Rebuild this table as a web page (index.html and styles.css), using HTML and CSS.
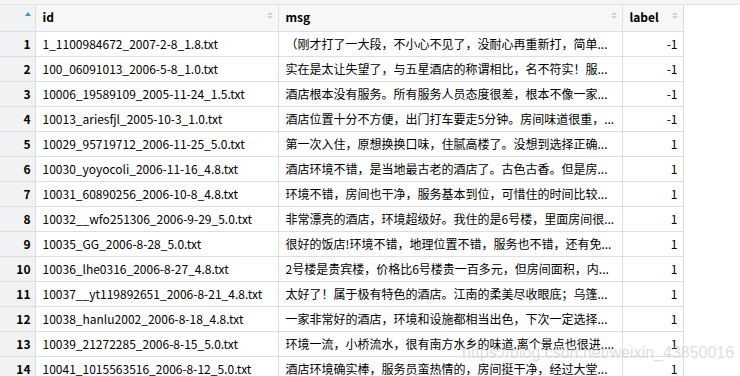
FILE: index.html
```html
<!DOCTYPE html>
<html lang="zh">
  <head>
    <meta charset="UTF-8" />
    <title>Data viewer</title>
    <link rel="stylesheet" href="styles.css">
  </head>
  <body>
    <div class="toolbar"></div>
    <table class="grid">
      <colgroup>
        <col class="c-num">
        <col class="c-id">
        <col class="c-msg">
        <col class="c-label">
      </colgroup>
      <thead>
        <tr>
          <th class="num-head"><span class="sort-up"></span></th>
          <th><div class="head"><span>id</span><span class="sorter"></span></div></th>
          <th><div class="head"><span>msg</span><span class="sorter"></span></div></th>
          <th><div class="head"><span>label</span><span class="sorter"></span></div></th>
        </tr>
      </thead>
      <tbody>
        <tr><td class="num">1</td><td>1_1100984672_2007-2-8_1.8.txt</td><td>（刚才打了一大段，不小心不见了，没耐心再重新打，简单...</td><td class="val">-1</td></tr>
        <tr><td class="num">2</td><td>100_06091013_2006-5-8_1.0.txt</td><td>实在是太让失望了，与五星酒店的称谓相比，名不符实！服...</td><td class="val">-1</td></tr>
        <tr><td class="num">3</td><td>10006_19589109_2005-11-24_1.5.txt</td><td>酒店根本没有服务。所有服务人员态度很差，根本不像一家...</td><td class="val">-1</td></tr>
        <tr><td class="num">4</td><td>10013_ariesfjl_2005-10-3_1.0.txt</td><td>酒店位置十分不方便，出门打车要走5分钟。房间味道很重，...</td><td class="val">-1</td></tr>
        <tr><td class="num">5</td><td>10029_95719712_2006-11-25_5.0.txt</td><td>第一次入住，原想换换口味，住腻高楼了。没想到选择正确...</td><td class="val">1</td></tr>
        <tr><td class="num">6</td><td>10030_yoyocoli_2006-11-16_4.8.txt</td><td>酒店环境不错，是当地最古老的酒店了。古色古香。但是房...</td><td class="val">1</td></tr>
        <tr><td class="num">7</td><td>10031_60890256_2006-10-8_4.8.txt</td><td>环境不错，房间也干净，服务基本到位，可惜住的时间比较...</td><td class="val">1</td></tr>
        <tr><td class="num">8</td><td>10032__wfo251306_2006-9-29_5.0.txt</td><td>非常漂亮的酒店，环境超级好。我住的是6号楼，里面房间很...</td><td class="val">1</td></tr>
        <tr><td class="num">9</td><td>10035_GG_2006-8-28_5.0.txt</td><td>很好的饭店!环境不错，地理位置不错，服务也不错，还有免...</td><td class="val">1</td></tr>
        <tr><td class="num">10</td><td>10036_lhe0316_2006-8-27_4.8.txt</td><td>2号楼是贵宾楼，价格比6号楼贵一百多元，但房间面积，内...</td><td class="val">1</td></tr>
        <tr><td class="num">11</td><td>10037__yt119892651_2006-8-21_4.8.txt</td><td>太好了！属于极有特色的酒店。江南的柔美尽收眼底；乌篷...</td><td class="val">1</td></tr>
        <tr><td class="num">12</td><td>10038_hanlu2002_2006-8-18_4.8.txt</td><td>一家非常好的酒店，环境和设施都相当出色，下次一定选择...</td><td class="val">1</td></tr>
        <tr><td class="num">13</td><td>10039_21272285_2006-8-15_5.0.txt</td><td>环境一流，小桥流水，很有南方水乡的味道.离个景点也很进....</td><td class="val">1</td></tr>
        <tr><td class="num">14</td><td>10041_1015563516_2006-8-12_5.0.txt</td><td>酒店环境确实棒，服务员蛮热情的，房间挺干净，经过大堂...</td><td class="val">1</td></tr>
      </tbody>
    </table>
    <div class="watermark">https://blog.csdn.net/weixin_43850016</div>
  </body>
</html>
```

FILE: styles.css
```css
* {
  box-sizing: border-box;
}
body {
  margin: 0;
  background: #fff;
  color: #000;
  font-family: "Noto Sans CJK SC", "Liberation Sans", sans-serif;
  font-size: 12px;
  overflow: hidden;
  position: relative;
  height: 376px;
}
.toolbar {
  height: 5px;
  background: #f5f5f5;
  border-bottom: 1px solid #e3e3e3;
}
.grid {
  border-collapse: collapse;
  table-layout: fixed;
  width: 683px;
}
.c-num { width: 35px; }
.c-id { width: 243px; }
.c-msg { width: 344px; }
.c-label { width: 61px; }

th, td {
  border: 1px solid #dcdfe2;
  border-top: 0;
  line-height: 14px;
  white-space: nowrap;
  overflow: hidden;
  text-align: left;
}
th {
  height: 26px;
  padding: 0 5px 0 7px;
  background: #f8f8f8;
  font-weight: bold;
  vertical-align: top;
}
th:first-child, td:first-child {
  border-left: 0;
}
.head {
  display: flex;
  justify-content: space-between;
  padding-top: 5px;
}
.sorter {
  display: flex;
  flex-direction: column;
  gap: 1px;
  margin-top: 2px;
}
.sorter:before, .sorter:after {
  content: "";
  border-left: 3px solid transparent;
  border-right: 3px solid transparent;
}
.sorter:before {
  border-bottom: 3px solid #cfd2d6;
}
.sorter:after {
  border-top: 3px solid #cfd2d6;
}
.num-head {
  background: #f1f2f4;
  text-align: right;
  padding: 7px 4px 0 0;
}
.sort-up {
  display: inline-block;
  border-left: 3px solid transparent;
  border-right: 3px solid transparent;
  border-bottom: 4px solid #4a8fd8;
  vertical-align: top;
}
td {
  height: 25px;
  padding: 0 7px;
}
td.num {
  background: #f1f2f4;
  font-weight: bold;
  text-align: right;
  padding: 0 4px 0 0;
}
td.val {
  text-align: right;
  padding: 0 5px 0 0;
}
.watermark {
  position: absolute;
  left: 462px;
  top: 344px;
  font-family: "Liberation Sans", sans-serif;
  font-size: 16px;
  color: rgba(190, 190, 190, 0.5);
  pointer-events: none;
}
```
